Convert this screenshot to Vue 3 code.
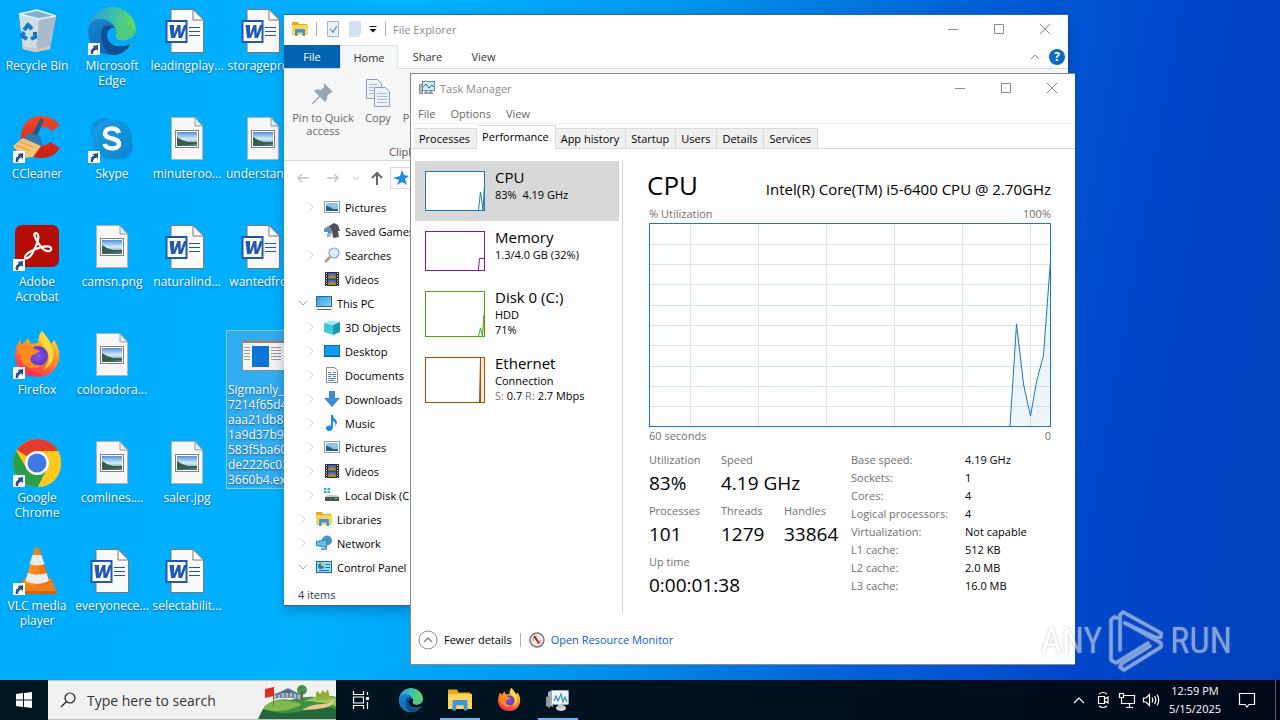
<script setup>
import { ref } from 'vue'

const columns = [
  [
    { icon: 'bin', label: 'Recycle Bin' },
    { icon: 'ccleaner', label: 'CCleaner', link: true },
    { icon: 'acrobat', label: 'Adobe Acrobat', link: true },
    { icon: 'firefox', label: 'Firefox', link: true },
    { icon: 'chrome', label: 'Google Chrome', link: true },
    { icon: 'vlc', label: 'VLC media player', link: true },
  ],
  [
    { icon: 'edge', label: 'Microsoft Edge', link: true },
    { icon: 'skype', label: 'Skype', link: true },
    { icon: 'image', label: 'camsn.png' },
    { icon: 'image', label: 'coloradora...' },
    { icon: 'image', label: 'comlines....' },
    { icon: 'word', label: 'everyonece...' },
  ],
  [
    { icon: 'word', label: 'leadingplay...' },
    { icon: 'image', label: 'minuteroo...' },
    { icon: 'word', label: 'naturalind...' },
    null,
    { icon: 'image', label: 'saler.jpg' },
    { icon: 'word', label: 'selectabilit...' },
  ],
  [
    { icon: 'word', label: 'storagepro...' },
    { icon: 'image', label: 'understand...' },
    { icon: 'word', label: 'wantedfro...' },
    { icon: 'exe', label: 'Sigmanly_ 7214f65d4d aaa21db80 1a9d37b96 583f5ba60 de2226c03 3660b4.exe', selected: true },
  ],
]

const tree = [
  { icon: 'pictures', label: 'Pictures', level: 2, arrow: 'right' },
  { icon: 'games', label: 'Saved Games', level: 2 },
  { icon: 'searches', label: 'Searches', level: 2, arrow: 'right' },
  { icon: 'videos', label: 'Videos', level: 2 },
  { icon: 'pc', label: 'This PC', level: 1, arrow: 'down' },
  { icon: 'cube', label: '3D Objects', level: 2, arrow: 'right' },
  { icon: 'desktop', label: 'Desktop', level: 2, arrow: 'right' },
  { icon: 'documents', label: 'Documents', level: 2, arrow: 'right' },
  { icon: 'downloads', label: 'Downloads', level: 2, arrow: 'right' },
  { icon: 'music', label: 'Music', level: 2, arrow: 'right' },
  { icon: 'pictures', label: 'Pictures', level: 2, arrow: 'right' },
  { icon: 'videos', label: 'Videos', level: 2, arrow: 'right' },
  { icon: 'disk', label: 'Local Disk (C:)', level: 2, arrow: 'right' },
  { icon: 'folder', label: 'Libraries', level: 1, arrow: 'right' },
  { icon: 'network', label: 'Network', level: 1, arrow: 'right' },
  { icon: 'control', label: 'Control Panel', level: 1, arrow: 'down' },
]

const tabs = ['Processes', 'Performance', 'App history', 'Startup', 'Users', 'Details', 'Services']
const activeTab = ref('Performance')

const resources = [
  { name: 'CPU', lines: ['83%  4.19 GHz'], color: '#1a7ab5', h: 40, path: 'M53.500 39 L55.500 21 L58 39 L60 6', active: true },
  { name: 'Memory', lines: ['1.3/4.0 GB (32%)'], color: '#8b12ae', h: 40, path: 'M53.500 39 L54.500 27.500 L60 27.500' },
  { name: 'Disk 0 (C:)', lines: ['HDD', '71%'], color: '#4da60c', h: 46, path: 'M53.500 45 L55.500 37 L57.500 45 L59 24 L59.500 45' },
  { name: 'Ethernet', lines: ['Connection'], net: true, color: '#a74f01', h: 46, path: 'M54.500 45 L55.500 1' },
]

const gridX = [41, 109, 177, 245, 313, 381]
const gridY = [21, 41, 61, 82, 102, 122, 143, 163, 183]

const specs = [
  ['Base speed:', '4.19 GHz'],
  ['Sockets:', '1'],
  ['Cores:', '4'],
  ['Logical processors:', '4'],
  ['Virtualization:', 'Not capable'],
  ['L1 cache:', '512 KB'],
  ['L2 cache:', '2.0 MB'],
  ['L3 cache:', '16.0 MB'],
]
const apps = [
  { icon: 'edge-bar', name: 'Microsoft Edge' },
  { icon: 'folder', name: 'File Explorer', running: true },
  { icon: 'firefox', name: 'Firefox' },
  { icon: 'taskmgr', name: 'Task Manager', running: true },
]
const search = ref('')
</script>

<template>
  <svg class="defs" aria-hidden="true">
    <defs>
      <linearGradient id="edgeGreen" x1="0" y1="0.4" x2="1" y2="0.5"><stop offset="0" stop-color="#2a9fd8" /><stop offset="0.5" stop-color="#3cbfae" /><stop offset="1" stop-color="#6be04a" /></linearGradient>
      <linearGradient id="edgeBlue" x1="0" y1="0" x2="0.6" y2="1"><stop offset="0" stop-color="#1a86cf" /><stop offset="1" stop-color="#0d63b8" /></linearGradient>
      <linearGradient id="foxBody" x1="0.8" y1="0" x2="0.3" y2="1"><stop offset="0" stop-color="#ffe843" /><stop offset="0.45" stop-color="#ff9320" /><stop offset="1" stop-color="#f8245b" /></linearGradient>
      <radialGradient id="foxGlobe"><stop offset="0" stop-color="#8c4df0" /><stop offset="1" stop-color="#5a3bc0" /></radialGradient>
      <linearGradient id="skypeG" x1="0" y1="0" x2="1" y2="1"><stop offset="0" stop-color="#1c9ee8" /><stop offset="1" stop-color="#0a86d0" /></linearGradient>
      <linearGradient id="cone" x1="0" x2="1"><stop offset="0" stop-color="#ff9a2a" /><stop offset="1" stop-color="#e96500" /></linearGradient>
      <linearGradient id="ccRed" x1="0" y1="0" x2="0" y2="1"><stop offset="0" stop-color="#ef4a2b" /><stop offset="1" stop-color="#c81e14" /></linearGradient>
      <linearGradient id="screen" x1="0" y1="0" x2="1" y2="1"><stop offset="0" stop-color="#2f9fe0" /><stop offset="1" stop-color="#7fd3f7" /></linearGradient>
      <linearGradient id="photo" x1="0" y1="0" x2="0" y2="1"><stop offset="0" stop-color="#4d8fe0" /><stop offset="0.5" stop-color="#d9ecf7" /><stop offset="1" stop-color="#3d6f80" /></linearGradient>
    </defs>
    <symbol id="i-bin" viewBox="0 -3 48 48">
      <path d="M6 4 L24 0 L43 6 L37 39 L23 42 L10 39Z" fill="#b9d8ea" />
      <path d="M6 4 L26 9 L23 42 L10 39Z" fill="#cfdde6" /><path d="M26 9 L43 6 L37 39 L23 42Z" fill="#a9bcc9" />
      <path d="M6 4 L24 0 L43 6 L26 9Z" fill="#7eb4d2" stroke="#e9f3f8" stroke-width="1.500" />
      <path d="M9 36 L23 39 L37 36 L37 39 L23 42 L10 39Z" fill="#d5c8bf" />
      <g fill="none" stroke="#1678c8" stroke-width="4"><path d="M11 20 L15 15 L19 19" /><path d="M22 22 L22 27 L18 29" /><path d="M14 29 L9 26 L11 22" /></g>
    </symbol>
    <symbol id="i-edge" viewBox="0 0 48 48">
      <circle cx="24" cy="24" r="24" fill="url(#edgeGreen)" />
      <path d="M0 24 C1 13 11 10 18 13 C25 15 27 21 27 21 C20 20 18 27 20 32 C23 42 37 42 44 35 C40 44 32 48 24 48 C10 48 0 38 0 24Z" fill="url(#edgeBlue)" />
      <path d="M13 28 C13 20 19 15 27 21 C20 20 18 27 20 32 C24 42 37 40 44 35 C40 43 33 48 26 48 C18 47 13 38 13 28Z" fill="#104f94" />
      <path d="M27 21 C31 25 25 29 29 32 C36 36 48 31 48 22 L50 36 L45 36 C34 42 23 39 20 32 C18 27 20 20 27 21Z" fill="#00a9fb" />
      <path d="M27 21 C31 25 26 29 29 31 C35 36 48 31 48 22 C44 20 34 14 27 21Z" fill="#4fcb80" />
    </symbol>
    <symbol id="i-edge-bar" viewBox="0 0 48 48">
      <circle cx="24" cy="24" r="24" fill="url(#edgeGreen)" />
      <path d="M0 24 C1 13 11 10 18 13 C25 15 27 21 27 21 C20 20 18 27 20 32 C23 42 37 42 44 35 C40 44 32 48 24 48 C10 48 0 38 0 24Z" fill="url(#edgeBlue)" />
      <path d="M13 28 C13 20 19 15 27 21 C20 20 18 27 20 32 C24 42 37 40 44 35 C40 43 33 48 26 48 C18 47 13 38 13 28Z" fill="#104f94" />
      <path d="M27 21 C31 25 25 29 29 32 C36 36 48 31 48 22 L50 36 L45 36 C34 42 23 39 20 32 C18 27 20 20 27 21Z" fill="#00141f" />
      <path d="M27 21 C31 25 26 29 29 31 C35 36 48 31 48 22 C44 20 34 14 27 21Z" fill="#4fcb80" />
    </symbol>
    <symbol id="i-word" viewBox="5 0 48 48">
      <path d="M13 2.500 H35 L45.500 13 V45.500 H13Z" fill="#fafafa" stroke="#777" />
      <path d="M35 2.500 V13 H45.500Z" fill="#fff" stroke="#777" />
      <path d="M31 20.500 H42 M31 24.500 H42 M31 28.500 H42" stroke="#2255a8" />
      <rect x="8.500" y="14" width="20" height="21" fill="#fff" stroke="#2058b8" stroke-width="2" />
      <path d="M11.500 18 H16 L16 27 L19.500 18 H22.500 L22.800 27 L26 18 H29 L24 31 H20.500 L20 23.500 L17 31 H13Z" fill="#2058b8" />
    </symbol>
    <symbol id="i-image" viewBox="4 0 48 48">
      <path d="M12.500 2.500 H36 L43.500 11 V44.500 H12.500Z" fill="#f6f7f7" stroke="#b8b0aa" />
      <path d="M36 2.500 V11 H43.500Z" fill="#e3f0f7" stroke="#999" />
      <rect x="16.500" y="15.500" width="23" height="17" fill="#fff" stroke="#808080" />
      <rect x="18" y="17" width="20" height="14" fill="url(#photo)" />
      <path d="M18 22 L23 25 L29 27 L38 27 V29 L18 31Z" fill="#355e4b" />
    </symbol>
    <symbol id="i-ccleaner" viewBox="0 0 48 48">
      <path d="M47 11 C38 -2 20 -3 11 10 C3 25 12 43 28 43 C38 43 44 38 47 33 L37 27 C33 31 28 32 24 28 C19 22 22 13 30 12 C34 12 37 14 38 16Z" fill="url(#ccRed)" />
      <path d="M28 3 L31 5 L23 24 L18 21Z" fill="#245b8f" /><path d="M15 18 L27 21 L29 29 L25 35 L10 27Z" fill="#347aae" />
      <path d="M10 23 L28 31 L20 42 L10 43 L0 31Z" fill="#f4c478" /><path d="M3 30 L17 36 M7 27 L20 32" stroke="#d9963a" />
    </symbol>
    <symbol id="i-skype" viewBox="0 0 48 48">
      <circle cx="16" cy="16" r="13" fill="#0d90e0" /><circle cx="33" cy="32" r="12" fill="#0c8bd6" /><circle cx="24" cy="24" r="20" fill="url(#skypeG)" />
      <path d="M31 18 C29 12 17 12 17 18.500 C17 25 31 22 31 29 C31 35 18 35 16.500 29" fill="none" stroke="#fff" stroke-width="4.500" />
    </symbol>
    <symbol id="i-acrobat" viewBox="0 0 48 48">
      <rect x="2" y="2" width="44" height="42" rx="7" fill="#b50d04" />
      <path d="M23 10 C18 10 26 22 30 26 C35 30 39 28 38 25 C36 21 18 26 13 32 C10 37 16 37 20 29 C24 22 28 11 23 10Z" fill="none" stroke="#fff" stroke-width="2.200" />
    </symbol>
    <symbol id="i-firefox" viewBox="0 0 48 48">
      <path d="M29 0 C33 5 36 8 38 13 L41 9 C46 16 48 25 45 32 C41 42 34 46 24 46 C11 46 2 37 2 25 C2 19 4 12 7 9 L9 14 L15 7 L18 13 L25 12 C25 7 26 3 29 0Z" fill="url(#foxBody)" />
      <circle cx="25" cy="25" r="10" fill="url(#foxGlobe)" />
      <path d="M5 17 C10 13 18 14 22 18 L27 20 C23 23 20 23 18 26 C16 32 22 35 28 34 C21 41 9 36 7 26Z" fill="#ff8b1e" />
      <path d="M29 0 C33 6 37 10 39 17 C43 26 38 36 30 39 C38 31 37 20 31 16 C26 12 26 4 29 0Z" fill="#ffd83d" />
    </symbol>
    <symbol id="i-chrome" viewBox="0 0 48 48">
      <circle cx="24" cy="24" r="24" fill="#fdc91e" />
      <path d="M24 24 L4 11 C9 4 16 0 24 0 C33 0 41 4 45 12 H24Z" fill="#e33b2e" />
      <path d="M3.300 12 L14 30 L24 36 L25 48 C12 48 0 38 0 24 C0 19 1 15 3.300 12Z" fill="#2c9e4b" />
      <path d="M34 30 L25 48 L17 40 L24 34Z" fill="#2c9e4b" /><path d="M34 30 L25 48 C39 48 48 37 48 24 C48 20 47 15 45 12 H24Z" fill="#fdc91e" />
      <circle cx="24" cy="24" r="12" fill="#fff" /><circle cx="24" cy="24" r="9.500" fill="#3c78e6" />
    </symbol>
    <symbol id="i-vlc" viewBox="0 0 48 48">
      <path d="M11 31 H38 L44 46 H6Z" fill="#f08019" /><path d="M6 44 H43 L44 47 H5Z" fill="#d86200" />
      <path d="M22 1 Q24 0 26 1 L37 36 Q24 43 12 36Z" fill="url(#cone)" />
      <path d="M19.500 8 H28.500 L31.500 17 Q24 20 16.500 17Z" fill="#e9e9e9" /><path d="M15 26 Q24 29 33.500 26 L36 34 Q24 40 12.500 34Z" fill="#ececec" />
    </symbol>
    <symbol id="i-exe" viewBox="0 0 48 48">
      <rect x="3.500" y="9.500" width="43" height="30" fill="#f4f4f4" stroke="#8a8a8a" /><rect x="3" y="9" width="44" height="3" fill="#888" />
      <rect x="13" y="15" width="17" height="21" fill="#0c74d8" />
      <path d="M5 16.500 H11 M5 19.500 H11 M5 22.500 H11 M5 25.500 H11 M5 28.500 H11 M32 16.500 H42 M32 19.500 H42 M32 22.500 H42 M32 25.500 H42 M32 28.500 H42" stroke="#9a9a9a" />
    </symbol>
    <symbol id="i-shortcut" viewBox="0 0 12 12">
      <rect width="12" height="12" fill="#fff" /><path d="M3 11 C2 7 4 5 6 5 L4.500 3 L10 2 L10 8 L8.500 6.500 C6 7 5 9 5 11Z" fill="#2d4d88" />
    </symbol>
    <symbol id="i-folder" viewBox="0 0 16 16">
      <path d="M0 1 H6 L7 3 H15 V14 H0Z" fill="#e6a81d" /><path d="M0 4 H16 V14 H0Z" fill="#ffd35c" />
      <path d="M3 15 V9 Q3 8 4 8 H12 Q13 8 13 9 V15 H10.500 V11.500 H5.500 V15Z" fill="#3b97d8" />
    </symbol>
    <symbol id="i-pictures" viewBox="0 0 16 16">
      <rect x="0.500" y="2.500" width="15" height="11" fill="#fff" stroke="#8ba0b2" /><rect x="2" y="4" width="12" height="8" fill="#8cc4ea" />
      <path d="M2 7 L6 8 L9 10 H14 V12 H2Z" fill="#2f5f78" />
    </symbol>
    <symbol id="i-games" viewBox="0 0 16 16">
      <path d="M5 3 L10 0 L14 2 L16 8 L14 8 L15 14 L9 15 L8 8 L5 6Z" fill="#4a5158" /><path d="M0 6 L4 3 L7 5 L8 9 L6 14 H3 L4 9 L0 9Z" fill="#5f91b8" /><circle cx="5" cy="12" r="2" fill="#9bb6ca" />
    </symbol>
    <symbol id="i-searches" viewBox="0 0 16 16">
      <path d="M1 15 L6 10" stroke="#a89a86" stroke-width="2.500" /><circle cx="10" cy="6" r="5" fill="#d6eefa" stroke="#8fa7b5" stroke-width="1.200" />
    </symbol>
    <symbol id="i-videos" viewBox="0 0 16 16">
      <rect x="1" y="1" width="14" height="14" fill="#2c2c30" /><rect x="4" y="2" width="8" height="5.500" fill="#4560c8" /><rect x="4" y="8.500" width="8" height="5.500" fill="#4560c8" />
      <path d="M4 6 L7 4 L12 5 V7.500 H4Z M4 12 L8 10 L12 12 V14 H4Z" fill="#a88c28" /><path d="M2.500 2 V15 M13.500 2 V15" stroke="#fff" stroke-dasharray="1 1.500" />
    </symbol>
    <symbol id="i-pc" viewBox="0 0 16 16"><rect x="0.500" y="1.500" width="15" height="10" fill="url(#screen)" stroke="#37698a" /><path d="M1 14.500 H15" stroke="#4d6b7c" /></symbol>
    <symbol id="i-cube" viewBox="0 0 16 16"><path d="M0 4 L7 1 L16 3 L9 6Z" fill="#a5edf2" /><path d="M0 4 L9 6 V16 L0 13Z" fill="#3fcad6" /><path d="M16 3 L9 6 V16 L16 13Z" fill="#149bb0" /></symbol>
    <symbol id="i-desktop" viewBox="0 0 16 16"><rect x="0.500" y="2.500" width="15" height="11" fill="#139bf0" stroke="#0c6db5" /><path d="M1 13 H15" stroke="#0a5ca0" /></symbol>
    <symbol id="i-documents" viewBox="0 0 16 16">
      <path d="M2.500 0.500 H10.500 L13.500 3.500 V15.500 H2.500Z" fill="#fff" stroke="#8a8a8a" /><path d="M4 5.500 H7 M9 5.500 H12 M4 7.500 H12 M4 9.500 H7 M9 9.500 H12 M4 11.500 H12 M4 13.500 H10" stroke="#3c80bd" />
    </symbol>
    <symbol id="i-downloads" viewBox="0 0 16 16"><path d="M5 0 H11 V7 H16 L8 16 L0 7 H5Z" fill="#3f8cd6" /></symbol>
    <symbol id="i-music" viewBox="0 0 16 16"><path d="M7 0 H9 C9 4 13 4 13 8 L11 12 C12 8 11 7 9 6 V12 C9 17 2 17 2 13 C2 11 5 10 7 11Z" fill="#1a8be0" /></symbol>
    <symbol id="i-disk" viewBox="0 0 16 16">
      <path d="M0 1 H2.500 V3 H0Z M3.500 1 H6 V3 H3.500Z M0 4 H2.500 V6 H0Z M3.500 4 H6 V6 H3.500Z" fill="#19b4d8" /><path d="M3 8 H13 L15 10 H1Z" fill="#c4c8ca" /><rect x="1" y="10" width="14" height="4" fill="#4c5356" /><rect x="11" y="11" width="2" height="1" fill="#7fe07f" />
    </symbol>
    <symbol id="i-network" viewBox="0 0 16 16"><circle cx="11" cy="5.500" r="5" fill="#4a94bd" /><path d="M0 6 L11 4 V13 L0 11Z" fill="#2f8bc5" /><path d="M1 7 L10 5.500 V11.500 L1 10Z" fill="#62c0ee" /><path d="M5 14 H11" stroke="#7d9db0" stroke-width="2" /></symbol>
    <symbol id="i-control" viewBox="0 0 16 16"><rect x="0.500" y="2.500" width="15" height="11" fill="#9bdcf8" stroke="#166798" /><circle cx="5" cy="7" r="3" fill="#1f7ec0" /><path d="M5 7 V4 A3 3 0 0 1 8 7Z" fill="#f4c23c" /><path d="M9.500 5.500 H14 M9.500 8.500 H14 M3 11.500 H13" stroke="#176ba5" /></symbol>
    <symbol id="i-taskmgr" viewBox="0 0 24 24">
      <path d="M2 4 L7 2 V19 L2 17Z" fill="#aeb6ba" /><path d="M0 9 L4 8 V20 L0 18Z" fill="#8f999e" /><rect x="5.500" y="2.500" width="17" height="14" rx="1" fill="#eef4f7" stroke="#9aa4aa" />
      <path d="M8 13 L10 8 L12 13 L15 6 L17 14 L19 9 L21 14" fill="none" stroke="#2f93c4" stroke-width="1.200" /><ellipse cx="15" cy="20" rx="5" ry="3" fill="#d6dadd" /><path d="M12 16 H17 V20 H12Z" fill="#bfc6ca" />
    </symbol>
    <symbol id="i-monitor" viewBox="0 0 16 16"><rect x="0.500" y="4.500" width="3" height="9" fill="#aab7bc" stroke="#8a979c" /><rect x="3.500" y="1.500" width="12" height="9" fill="#c7eff5" stroke="#7c8b91" /><path d="M4 7 L7 4 L10 8 L13 5 L15 7" fill="none" stroke="#237b9b" /><path d="M7 11 V13 M12 11 V13 M5 13 H14" stroke="#98a4a9" stroke-width="2" /></symbol>
  </svg>

  <div class="screen">
    <main class="desktop">
      <div class="shortcuts">
        <div v-for="(col, c) in columns" :key="c" class="column">
          <div v-for="(item, r) in col" :key="r" class="slot">
            <button v-if="item" class="shortcut" :class="{ selected: item.selected }">
              <span class="pic">
                <svg class="big"><use :href="'#i-' + item.icon" /></svg>
                <svg v-if="item.link" class="arrow"><use href="#i-shortcut" /></svg>
              </span>
              <span class="caption">{{ item.label }}</span>
            </button>
          </div>
        </div>
      </div>

      <section class="window explorer" aria-label="File Explorer">
        <header class="titlebar">
          <svg class="s16"><use href="#i-folder" /></svg>
          <i class="bar"></i>
          <svg class="s16 quick" viewBox="0 0 16 16"><path d="M2.500 0.500 H13.500 V15.500 H2.500Z" fill="#e9f1fb" stroke="#9eb4cf" /><path d="M5 8 L8 11 L12 5" fill="none" stroke="#7f9dc4" stroke-width="1.500" /></svg>
          <svg class="s16 quick2" viewBox="0 0 16 16"><path d="M2 0 H14 V12 L12 16 H2Z" fill="#d4dff0" /></svg>
          <svg class="caret" viewBox="0 0 8 8"><path d="M0.500 1.500 H7.500" stroke="#111" /><path d="M0.500 4 H7.500 L4 7.500Z" fill="#111" /></svg>
          <i class="bar"></i>
          <h1>File Explorer</h1>
          <span class="controls">
            <button aria-label="Minimize"><svg viewBox="0 0 12 12"><path d="M1 6.500 H11" /></svg></button>
            <button aria-label="Maximize"><svg viewBox="0 0 12 12"><path d="M1.500 1.500 H10.500 V10.500 H1.500Z" /></svg></button>
            <button aria-label="Close"><svg viewBox="0 0 12 12"><path d="M1 1 L11 11 M11 1 L1 11" /></svg></button>
          </span>
        </header>
        <nav class="ribbon-tabs">
          <button class="file">File</button>
          <button class="current">Home</button>
          <button>Share</button>
          <button>View</button>
          <span class="help">
            <svg class="chev" viewBox="0 0 10 10"><path d="M1 7 L5 3 L9 7" fill="none" stroke="#8a8a8a" /></svg>
            <button class="question" aria-label="Help">?</button>
          </span>
        </nav>
        <div class="ribbon">
          <div class="tools">
            <button class="tool pin">
              <svg viewBox="0 0 32 32"><path d="M17 6 L26 15 L23 16 L20 19 C21 22 19 24 18 25 L13 20 L6 27 L5 26 L12 19 L7 14 C9 12 12 12 14 13 L17 10Z" fill="#9aa5b4" /></svg>
              Pin to Quick access
            </button>
            <button class="tool">
              <svg viewBox="0 0 32 32"><g fill="#edf2fa" stroke="#8c9dbb"><path d="M4.500 2.500 H15.500 L19.500 6.500 V21.500 H4.500Z" /><path d="M12.500 10.500 H23.500 L27.500 14.500 V29.500 H12.500Z" /></g><path d="M7 7.500 H15 M7 10.500 H12 M7 13.500 H12 M7 16.500 H12 M15 16.500 H25 M15 19.500 H25 M15 22.500 H25 M15 25.500 H25" stroke="#a9badb" /></svg>
              Copy
            </button>
            <button class="tool paste" aria-label="Paste">P</button>
          </div>
          <div class="group">Clipb</div>
        </div>
        <div class="address">
          <svg class="back" viewBox="0 0 12 12"><path d="M12 6 H1 M5 2 L1 6 L5 10" /></svg>
          <svg class="back" viewBox="0 0 12 12"><path d="M0 6 H11 M7 2 L11 6 L7 10" /></svg>
          <svg class="mini" viewBox="0 0 8 8"><path d="M1 3 L4 6 L7 3" /></svg>
          <svg class="up" viewBox="0 0 12 14"><path d="M6 14 V2 M1 7 L6 2 L11 7" /></svg>
          <span class="path"><svg class="s16" viewBox="0 0 16 16"><path d="M9 0 L11 5 L16 6 L12 9 L14 15 L9 12 L4 15 L6 10 L0 8 L7 6Z" fill="#1c8be0" /></svg></span>
        </div>
        <ul class="tree">
          <li v-for="(n, i) in tree" :key="i" :class="'level' + n.level">
            <svg class="twist" viewBox="0 0 8 8"><path v-if="n.arrow === 'right'" d="M2 0 L6 4 L2 8" stroke="#d0d0d0" /><path v-else-if="n.arrow === 'down'" d="M0 2 L4 6 L8 2" stroke="#a8a8a8" /></svg>
            <svg class="s16"><use :href="'#i-' + n.icon" /></svg>
            <span>{{ n.label }}</span>
          </li>
        </ul>
        <footer class="status">4 items</footer>
      </section>

      <section class="window taskmgr" aria-label="Task Manager">
        <header class="titlebar">
          <svg class="s16"><use href="#i-monitor" /></svg>
          <h1>Task Manager</h1>
          <span class="controls">
            <button aria-label="Minimize"><svg viewBox="0 0 12 12"><path d="M1 6.500 H11" /></svg></button>
            <button aria-label="Maximize"><svg viewBox="0 0 12 12"><path d="M1.500 1.500 H10.500 V10.500 H1.500Z" /></svg></button>
            <button aria-label="Close"><svg viewBox="0 0 12 12"><path d="M1 1 L11 11 M11 1 L1 11" /></svg></button>
          </span>
        </header>
        <nav class="menu"><button>File</button><button>Options</button><button>View</button></nav>
        <div class="tabs" role="tablist">
          <button v-for="t in tabs" :key="t" role="tab" :aria-selected="t === activeTab" :class="{ on: t === activeTab }" @click="activeTab = t">{{ t }}</button>
        </div>
        <div class="content">
          <div class="resources">
            <button v-for="r in resources" :key="r.name" class="resource" :class="{ active: r.active }">
              <svg class="thumb" :viewBox="'0 0 60 ' + r.h" :style="{ height: r.h + 'px' }">
                <rect x="0.500" y="0.500" width="59" :height="r.h - 1" fill="#fff" :stroke="r.color" />
                <rect v-if="r.net" x="55.500" y="0.500" width="4" :height="r.h - 1" fill="#fbe9da" :stroke="r.color" />
                <path :d="r.path" :stroke="r.color" fill="none" />
              </svg>
              <span class="info">
                <strong>{{ r.name }}</strong>
                <span v-for="l in r.lines" :key="l" class="line">{{ l }}</span>
                <span v-if="r.net" class="line"><em>S:</em> 0.7 <em>R:</em> 2.7 Mbps</span>
              </span>
            </button>
          </div>
          <div class="detail">
            <div class="heading"><h2>CPU</h2><span>Intel(R) Core(TM) i5-6400 CPU @ 2.70GHz</span></div>
            <div class="axis"><span>% Utilization</span><span>100%</span></div>
            <svg class="chart" viewBox="0 0 402 204" preserveAspectRatio="none">
              <rect x="0.500" y="0.500" width="401" height="203" fill="#fff" />
              <path v-for="x in gridX" :key="'x' + x" :d="'M' + (x + 0.5) + ' 1 V203'" stroke="#d6e4ec" />
              <path v-for="y in gridY" :key="'y' + y" :d="'M1 ' + (y + 0.5) + ' H401'" stroke="#d6e4ec" />
              <path d="M361 203 L367.500 101 L374.500 161 L381.500 193 L387.500 159 L394.500 132 L401.500 37 V203Z" fill="#1a7ab5" fill-opacity="0.080" />
              <path d="M361 203 L367.500 101 L374.500 161 L381.500 193 L387.500 159 L394.500 132 L401.500 37" fill="none" stroke="#1a7ab5" />
              <rect x="0.500" y="0.500" width="401" height="203" fill="none" stroke="#1a7ab5" />
            </svg>
            <div class="axis"><span>60 seconds</span><span>0</span></div>
            <div class="figures">
              <dl class="live">
                <div><dt>Utilization</dt><dd>83%</dd></div>
                <div class="wide"><dt>Speed</dt><dd>4.19 GHz</dd></div>
                <div><dt>Processes</dt><dd>101</dd></div>
                <div><dt>Threads</dt><dd>1279</dd></div>
                <div><dt>Handles</dt><dd>33864</dd></div>
                <div class="full"><dt>Up time</dt><dd>0:00:01:38</dd></div>
              </dl>
              <table class="specs"><tbody><tr v-for="s in specs" :key="s[0]"><th scope="row">{{ s[0] }}</th><td>{{ s[1] }}</td></tr></tbody></table>
            </div>
          </div>
        </div>
        <footer class="actions">
          <button>
            <svg class="round" viewBox="0 0 20 20"><circle cx="10" cy="10" r="9" fill="#fff" stroke="#8a8a8a" /><path d="M6 12 L10 8 L14 12" fill="none" stroke="#8a8a8a" stroke-width="1.500" /></svg>
            Fewer details
          </button>
          <i class="bar"></i>
          <a href="#monitor">
            <svg class="s16" viewBox="0 0 16 16"><circle cx="8" cy="8" r="7" fill="#f2eeee" stroke="#777" stroke-width="1.500" /><path d="M4 9 A4 4 0 0 1 8 4 M12 8 A4 4 0 0 1 8 12" fill="none" stroke="#b08080" /><path d="M5 4 L10 11" stroke="#b81818" stroke-width="2" /></svg>
            Open Resource Monitor
          </a>
        </footer>
      </section>

      <div class="watermark">
        <span>ANY</span>
        <svg viewBox="0 0 56 62"><g fill="none" stroke="#fff" stroke-width="3.500" stroke-linejoin="round" stroke-linecap="round"><path d="M9 8 L6 7 L3 10 V50 L8 53 L40 33" /><path d="M12 40 V5 L15 2 L53 23 V27 L49 28 L17 13" /><path d="M17 13 L53 33 L53 37 L16 60 L12 57 L13 54 L42 36" /></g></svg>
        <span>RUN</span>
      </div>
    </main>

    <footer class="taskbar">
      <button class="start" aria-label="Start"><svg viewBox="0 0 16 16"><path d="M0 2 L7 1 V7.500 H0Z M8 1 L16 0 V7.500 H8Z M0 8.500 H7 V15 L0 14Z M8 8.500 H16 V16 L8 15Z" fill="#fff" /></svg></button>
      <label class="search">
        <svg class="lens" viewBox="0 0 16 16"><circle cx="10" cy="6" r="5" fill="none" stroke="#222" stroke-width="1.200" /><path d="M6 10 L1 15" stroke="#222" stroke-width="1.200" /></svg>
        <input v-model="search" type="text" placeholder="Type here to search" aria-label="Search" />
        <svg class="scene" viewBox="0 0 80 38">
          <path d="M2 38 L9 25 Q20 16 34 19 Q50 15 60 16 Q72 13 80 16 V38Z" fill="#3f8f45" /><path d="M9 25 Q22 16 38 21 Q52 23 38 27 Q20 33 7 28Z" fill="#82b94d" /><path d="M2 38 L7 28 Q30 36 50 29 Q66 23 80 28 V38Z" fill="#23683b" />
          <path d="M48 20 Q64 13 80 17 V25 Q60 20 48 20Z" fill="#9bc558" /><path d="M46 29 Q56 22 70 23 Q74 21 78 18 Q78 25 68 27 Q58 29 46 29Z" fill="#ecc98f" />
          <path d="M17 18 V13 L24 11 L32 7 L40 11 L47 13 V19 Q32 15 17 18Z" fill="#71879f" /><path d="M19 17 V14 M23 17 V14 M27 16 V12 M31 16 V12 M35 16 V12 M39 17 V13 M43 18 V14" stroke="#e3ebf3" /><path d="M22 12 L32 8 L41 12Z" fill="#4f6d8e" />
          <circle cx="46" cy="9" r="5" fill="#4c9150" /><path d="M46 10 V19" stroke="#5c4631" /><path d="M60 19 V12 L62 10 L64 13 L67 9 L69 12 L72 8 L74 18Z" fill="#93ad3b" />
          <path d="M17.500 6 V26" stroke="#8d6f55" /><path d="M9 8 L18 6 V15 L9 17Z" fill="#d92c25" />
        </svg>
      </label>
      <button class="view" aria-label="Task view"><svg viewBox="0 0 18 18"><path d="M1.500 0 V3.500 H11.500 V0 M1.500 18 V14.500 H11.500 V18 M1.500 6 H11.500 V12 H1.500Z M15.500 1 V4 M15.500 11 V18" fill="none" stroke="#fff" stroke-width="1.200" /><rect x="14" y="6" width="3" height="3" fill="#fff" /></svg></button>
      <button v-for="a in apps" :key="a.name" class="app" :class="{ running: a.running }" :aria-label="a.name"><svg><use :href="'#i-' + a.icon" /></svg></button>
      <div class="tray">
        <svg viewBox="0 0 18 18"><path d="M4 12 L9 7 L14 12" /></svg>
        <svg viewBox="0 0 18 18"><path d="M4.500 5.500 H10.500 V12.500 H4.500Z M10.500 8 L14 6 V12 L10.500 10 M5 3 Q9 0 13 3 M5 15 Q9 18 13 15" /></svg>
        <svg viewBox="0 0 18 18"><path d="M5 4.500 H16.500 V12.500 H7 M11.500 12.500 V16 M8 16.500 H15 M1.500 2.500 H5.500 V6.500 H1.500Z M3.500 6.500 V12.500 H7" /></svg>
        <svg viewBox="0 0 18 18"><path d="M1.500 7 H4 L7.500 3.500 V14.500 L4 11 H1.500Z M10 6.500 Q11.500 9 10 11.500 M12.500 5 Q15 9 12.500 13 M15 3.500 Q18.500 9 15 14.500" /></svg>
        <time>12:59 PM<br />5/15/2025</time>
        <svg class="note" viewBox="0 0 18 18"><path d="M1.500 2.500 H16.500 V13.500 H11 L9 16 L7 13.500 H1.500Z" /></svg>
        <i class="peek"></i>
      </div>
    </footer>
  </div>
</template>

<style>
body { margin: 0; overflow: hidden; }
</style>

<style scoped>
* { box-sizing: border-box; }
button { font: inherit; color: inherit; background: none; border: 0; padding: 0; margin: 0; }
svg { display: block; flex: none; }
.defs { position: absolute; width: 0; height: 0; }
.s16 { width: 16px; height: 16px; }
.screen { height: 100vh; display: flex; flex-direction: column; font: 11px/15px "Open Sans", "Noto Sans", sans-serif; color: #000; }
.desktop { position: relative; flex: 1; min-height: 0; overflow: hidden; background: linear-gradient(100deg, #00aafd 0%, #00b2ff 30%, #0098ee 48%, #0064d8 68%, #0048cc 84%, #003ebc 100%); }

.shortcuts { display: flex; }
.column { width: 75px; }
.slot { height: 108px; padding-top: 6px; }
.column:last-child .slot { padding-left: 1px; }
.shortcut { width: 74px; display: flex; flex-direction: column; align-items: center; padding: 0 0 1px; color: #fff; border: 1px solid transparent; }
.selected { background: rgba(120, 170, 220, 0.4); border-color: rgba(170, 215, 250, 0.7); }
.pic { position: relative; height: 48px; }
.big { width: 48px; height: 48px; }
.arrow { position: absolute; left: 0; bottom: 0; width: 12px; height: 12px; }
.caption { margin-top: 3px; text-align: center; font-size: 12px; line-height: 15px; width: 74px; text-shadow: 0 1px 2px rgba(0, 50, 110, 0.7); }
.selected .caption { text-align: left; padding-left: 2px; }

.window { position: absolute; display: flex; flex-direction: column; background: #fff; overflow: hidden; }
.explorer { top: 14px; left: 284px; right: 212px; bottom: 74px; border-top: 1px solid #2b6a9e; border-bottom: 1px solid #34678c; box-shadow: 0 4px 12px rgba(0, 30, 80, 0.3); }
.taskmgr { top: 73px; left: 410px; right: 205px; bottom: 15px; border: 1px solid #8b8b8b; border-right: 0; }
.titlebar { height: 30px; display: flex; align-items: center; padding: 0 0 2px 8px; color: #8c8c8c; flex: none; }
.titlebar h1 { font: inherit; margin: 0 0 0 5px; }
.bar { width: 1px; height: 14px; background: #b0b0b0; margin: 0 8px; }
.quick2 { margin: 0 6px; }
.caret { width: 8px; height: 8px; }
.explorer .bar:nth-of-type(2) { margin-right: 2px; }
.controls { margin-left: auto; display: flex; align-self: stretch; }
.controls button { width: 46px; display: grid; place-items: center; }
.controls svg { width: 12px; height: 12px; fill: none; stroke: #8a8a8a; }

.ribbon-tabs { height: 24px; display: flex; border-bottom: 1px solid #dadbdc; flex: none; }
.ribbon-tabs > button { width: 56px; color: #333; }
.ribbon-tabs > .file { background: #0063b1; color: #fff; }
.ribbon-tabs > .current { width: 58px; background: #f5f6f7; border: 1px solid #e0e2e4; border-bottom: 0; margin-bottom: -1px; }
.ribbon-tabs > button:nth-child(3) { width: 59px; }
.ribbon-tabs > button:nth-child(4) { width: 53px; }
.help { margin-left: auto; display: flex; align-items: center; gap: 9px; padding-right: 3px; }
.chev { width: 10px; height: 10px; }
.question { width: 16px; height: 16px; border-radius: 50%; background: #0a6cc0; color: #fff; font-weight: 700; font-size: 12px; }
.ribbon { height: 92px; background: #f5f6f7; border-bottom: 1px solid #d6d7d8; color: #666; flex: none; display: flex; flex-direction: column; justify-content: space-between; }
.tools { display: flex; }
.tool { width: 36px; display: flex; flex-direction: column; align-items: center; padding-top: 8px; line-height: 13px; gap: 2px; }
.tool svg { width: 32px; height: 32px; }
.pin { width: 66px; margin: 0 4px 0 6px; }
.paste { width: 20px; padding-top: 42px; justify-content: flex-start; }
.group { padding: 0 0 2px 105px; line-height: 13px; color: #555; }
.address { height: 34px; display: flex; align-items: center; flex: none; }
.address svg { fill: none; stroke: #c4c4c4; stroke-width: 1.5; }
.address .back { width: 12px; height: 12px; margin-left: 13px; }
.address .back + .back { margin-left: 18px; }
.address .mini { width: 8px; height: 8px; margin-left: 13px; stroke-width: 1; }
.address .up { width: 12px; height: 14px; margin: 0 7px 0 11px; stroke: #666; stroke-width: 2; }
.path { height: 22px; flex: 1; border: 1px solid #d9d9d9; display: flex; align-items: center; padding-left: 2px; }
.path .s16 { stroke: none; }
.tree { list-style: none; margin: 0; padding: 0; flex: 1; min-height: 0; overflow: hidden; }
.tree li { height: 24px; display: flex; align-items: center; }
.tree li.level1 { padding-left: 15px; }
.tree li.level2 { padding-left: 23px; }
.tree .s16 { margin: 0 5px 0 9px; }
.twist { width: 8px; height: 8px; fill: none; }
.status { height: 24px; padding: 6px 14px 0; color: #1e395b; flex: none; }

.menu { height: 20px; display: flex; gap: 15px; padding: 0 7px; color: #666; border-bottom: 1px solid #f0f0f0; flex: none; }
.tabs { display: flex; align-items: flex-end; height: 25px; padding: 2px 0 0 3px; border-bottom: 1px solid #d9d9d9; flex: none; }
.tabs button { height: 20px; padding: 0 6px 0 5px; background: #f0f0f0; border: 1px solid #d9d9d9; border-left-width: 0; border-bottom: 0; }
.tabs .on { height: 24px; padding-bottom: 3px; margin-bottom: -1px; background: #fff; }
.content { flex: 1; min-height: 0; display: flex; padding: 12px 0 3px 4px; }
.resources { width: 208px; border-right: 1px solid #d4d4d4; flex: none; padding-right: 3px; }
.resource { width: 100%; display: flex; gap: 10px; text-align: left; padding: 10px 0 10px 10px; }
.active { background: #d8d8d8; }
.thumb { width: 60px; }
.info { display: flex; flex-direction: column; margin: -4px 0; white-space: pre; }
.info strong { font-size: 15px; line-height: 20px; font-weight: 400; }
.info .line { line-height: 15px; }
.info em { font-style: normal; color: #777; }
.detail { flex: 1; min-width: 0; padding: 4px 24px 0 26px; }
.heading { display: flex; justify-content: space-between; align-items: baseline; height: 40px; margin-left: -2px; font-size: 15px; line-height: 40px; }
.heading h2 { font-size: 26px; line-height: 40px; font-weight: 400; margin: 0; }
.axis { display: flex; justify-content: space-between; color: #707070; height: 18px; line-height: 18px; }
.chart { width: 100%; height: 204px; }
.figures { display: flex; justify-content: space-between; margin-top: 6px; }
.live { margin: 0; display: grid; grid-template-columns: 72px 63px 58px; grid-auto-rows: 51px; }
.live .wide { grid-column: span 2; }
.live .full { grid-column: span 3; }
.live dt { color: #707070; line-height: 18px; }
.live dd { margin: 0; font-size: 19px; line-height: 28px; }
.specs { border-collapse: collapse; width: 200px; height: 144px; }
.specs th, .specs td { padding: 0; height: 18px; font-weight: 400; text-align: left; line-height: 18px; white-space: nowrap; }
.specs th { width: 114px; color: #707070; }
.actions { height: 49px; display: flex; align-items: center; padding-left: 7px; flex: none; }
.actions button, .actions a { display: flex; align-items: center; gap: 6px; }
.actions a { color: #0a5bc4; text-decoration: none; }
.round { width: 20px; height: 20px; }

.watermark { position: absolute; right: 48px; bottom: 8px; display: flex; align-items: center; gap: 6px; opacity: 0.5; color: #fff; font: 400 36px/62px "Roboto Condensed", "Liberation Sans Narrow", Roboto, sans-serif; text-shadow: 0 0 3px #888; }
.watermark svg { width: 56px; height: 62px; filter: drop-shadow(0 0 1px #888); }

.taskbar { height: 40px; flex: none; display: flex; background: linear-gradient(90deg, #001722, #00111f 60%, #00081a); color: #fff; }
.start, .view { width: 48px; display: grid; place-items: center; }
.start svg { width: 16px; height: 16px; }
.search { width: 288px; display: flex; align-items: center; background: #f1f1f1; border: 1px solid #c0c0c0; border-width: 1px 0; padding-left: 12px; }
.lens { width: 16px; height: 16px; margin-right: 11px; }
.search input { flex: 1; min-width: 0; height: 100%; border: 0; outline: 0; padding: 0; background: none; font: 14px "Open Sans", sans-serif; color: #222; }
.search input::placeholder { color: #333; opacity: 1; }
.scene { width: 80px; height: 38px; }
.view { width: 50px; }
.view svg { width: 18px; height: 18px; }
.app { width: 49px; display: grid; place-items: center; }
.app svg { width: 24px; height: 24px; }
.running { background: linear-gradient(#76b0e8, #76b0e8) center bottom / 40px 2px no-repeat; }
.tray { margin-left: auto; display: flex; align-items: center; gap: 6px; }
.tray svg { width: 18px; height: 18px; fill: none; stroke: #fff; stroke-width: 1.2; }
.tray time { width: 58px; text-align: center; line-height: 18px; white-space: nowrap; }
.tray .note { margin: 0 13px 0 8px; }
.peek { width: 5px; height: 40px; border-left: 1px solid #555e68; }
</style>
